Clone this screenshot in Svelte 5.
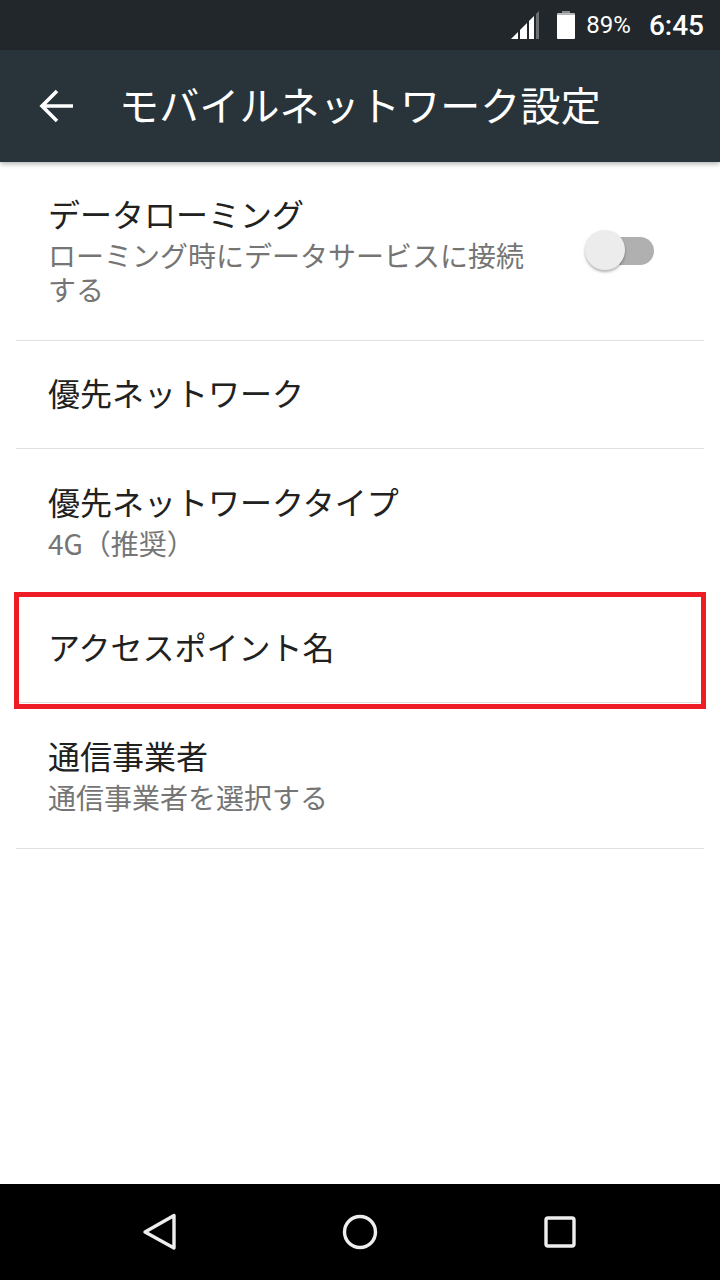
<script>
    let rows = [
        { title: "データローミング", sub: "ローミング時にデータサービスに接続する", toggle: true },
        { title: "優先ネットワーク" },
        { title: "優先ネットワークタイプ", sub: "4G（推奨）" },
        { title: "アクセスポイント名", marked: true },
        { title: "通信事業者", sub: "通信事業者を選択する" },
    ];
</script>

<main class="screen">
    <div class="status">
        <svg class="signal" width="30" height="30" viewBox="0 0 30 30">
            <polygon points="1,29 8,29 8,22" fill="#fff" />
            <polygon points="10,29 17,29 17,13 10,20" fill="#fff" />
            <polygon points="19,29 24,29 24,6 19,11" fill="#fff" />
            <polygon points="26,29 29,29 29,1 26,4" fill="#6b7073" />
        </svg>
        <svg class="battery" width="20" height="30" viewBox="0 0 20 30">
            <path d="M6 1h8v2H6z" fill="#8a8d8f" />
            <path d="M1 4q0-1 1-1h16q1 0 1 1v1H1z" fill="#b4b6b7" />
            <path d="M1 5h18v23q0 1-1 1H2q-1 0-1-1z" fill="#fff" />
        </svg>
        <span class="percent">89%</span>
        <span class="clock">6:45</span>
    </div>

    <header class="toolbar">
        <svg class="back" width="36" height="36" viewBox="0 0 36 36">
            <path d="M34 18H4M18 3 3 18l15 15" fill="none" stroke="#fff" stroke-width="3.6" />
        </svg>
        <h1>モバイルネットワーク設定</h1>
    </header>

    <div class="list">
        {#each rows as row}
            <div class="row" class:tall={row.sub} class:first={row.toggle}>
                <div class="text">
                    <div class="title">{row.title}</div>
                    {#if row.sub}
                        <div class="sub">{row.sub}</div>
                    {/if}
                </div>
                {#if row.toggle}
                    <div class="switch">
                        <div class="track"></div>
                        <div class="thumb"></div>
                    </div>
                {/if}
                {#if row.marked}
                    <div class="mark"></div>
                {/if}
            </div>
        {/each}
    </div>

    <nav class="navbar">
        <svg width="40" height="40" viewBox="0 0 40 40">
            <path d="M34 3.5V36L5 20z" fill="none" stroke="#eee" stroke-width="3.4" stroke-linejoin="round" />
        </svg>
        <svg width="40" height="40" viewBox="0 0 40 40">
            <circle cx="20" cy="20" r="15.5" fill="none" stroke="#eee" stroke-width="3.4" />
        </svg>
        <svg width="40" height="40" viewBox="0 0 40 40">
            <rect x="6" y="6" width="28" height="28" rx="2" fill="none" stroke="#eee" stroke-width="3.4" />
        </svg>
    </nav>
</main>

<style>
    :global(body) {
        margin: 0;
        background: #fff;
    }

    .screen {
        display: flex;
        flex-direction: column;
        height: 1280px;
        font-family: "Noto Sans CJK JP", "Roboto", sans-serif;
        overflow: hidden;
    }

    .status {
        display: flex;
        align-items: center;
        justify-content: flex-end;
        height: 50px;
        padding-right: 16px;
        background: #21272b;
        color: #fff;
        font-family: "Roboto", sans-serif;
    }

    .signal {
        margin-right: 16px;
    }

    .battery {
        margin-right: 10px;
    }

    .percent {
        font-size: 24px;
        margin-right: 18px;
    }

    .clock {
        font-size: 28px;
        font-weight: 500;
    }

    .toolbar {
        display: flex;
        align-items: center;
        height: 112px;
        padding-left: 39px;
        background: #29343a;
        box-shadow: 0 2px 5px rgba(0, 0, 0, 0.3);
        position: relative;
    }

    .toolbar h1 {
        margin: 0 0 5px 44px;
        font-size: 40px;
        font-weight: 400;
        letter-spacing: 0.15px;
        color: #fff;
        line-height: 1;
    }

    .back {
        margin-bottom: 1px;
    }

    .list {
        flex: 1;
        padding: 0 16px;
    }

    .row {
        position: relative;
        display: flex;
        align-items: center;
        height: 107px;
        padding: 0 32px;
        border-bottom: 1px solid #e0e0e0;
    }

    .row.tall {
        height: 145px;
    }

    .row.first {
        height: 178px;
    }

    .text {
        flex: 1;
        min-width: 0;
        padding-bottom: 6px;
    }

    .tall .text {
        padding-bottom: 0;
    }

    .title {
        font-size: 32px;
        line-height: 34px;
        color: #212121;
    }

    .sub {
        margin-top: 8px;
        font-size: 28px;
        line-height: 34px;
        color: #757575;
    }

    .first .text {
        width: 476px;
        flex: none;
    }

    .switch {
        position: relative;
        width: 69px;
        height: 44px;
        margin-left: auto;
        margin-right: 18px;
    }

    .track {
        position: absolute;
        left: 14px;
        right: 0;
        top: 8px;
        height: 28px;
        border-radius: 14px;
        background: #b0b0b0;
    }

    .thumb {
        position: absolute;
        left: 0;
        top: 1px;
        width: 40px;
        height: 40px;
        border-radius: 50%;
        background: #ececec;
        box-shadow: 0 2px 3px rgba(0, 0, 0, 0.3);
    }

    .mark {
        position: absolute;
        left: -2px;
        right: -2px;
        top: -3px;
        bottom: -7px;
        border: 5px solid #ee1c25;
    }

    .navbar {
        display: flex;
        justify-content: space-between;
        align-items: center;
        height: 96px;
        padding: 0 140px;
        background: #000;
    }
</style>
